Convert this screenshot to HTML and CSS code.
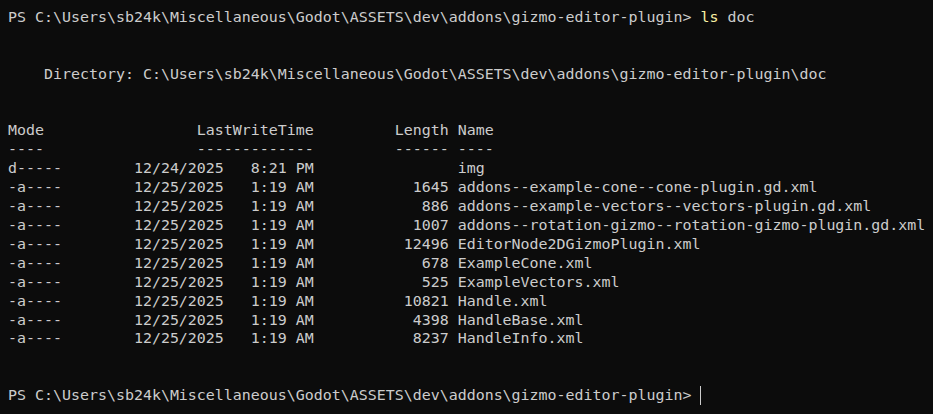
FILE: index.html
```
<!DOCTYPE html>
<html>
<head>
<meta charset="utf-8">
<link rel="stylesheet" href="styles.css">
</head>
<body>
<pre class="term">PS C:\Users\sb24k\Miscellaneous\Godot\ASSETS\dev\addons\gizmo-editor-plugin> <span class="cmd">ls</span> doc


    Directory: C:\Users\sb24k\Miscellaneous\Godot\ASSETS\dev\addons\gizmo-editor-plugin\doc


Mode                 LastWriteTime         Length Name
----                 -------------         ------ ----
d-----        12/24/2025   8:21 PM                img
-a----        12/25/2025   1:19 AM           1645 addons--example-cone--cone-plugin.gd.xml
-a----        12/25/2025   1:19 AM            886 addons--example-vectors--vectors-plugin.gd.xml
-a----        12/25/2025   1:19 AM           1007 addons--rotation-gizmo--rotation-gizmo-plugin.gd.xml
-a----        12/25/2025   1:19 AM          12496 EditorNode2DGizmoPlugin.xml
-a----        12/25/2025   1:19 AM            678 ExampleCone.xml
-a----        12/25/2025   1:19 AM            525 ExampleVectors.xml
-a----        12/25/2025   1:19 AM          10821 Handle.xml
-a----        12/25/2025   1:19 AM           4398 HandleBase.xml
-a----        12/25/2025   1:19 AM           8237 HandleInfo.xml


PS C:\Users\sb24k\Miscellaneous\Godot\ASSETS\dev\addons\gizmo-editor-plugin> <span class="cursor"></span></pre>
</body>
</html>
```
FILE: styles.css
```
html, body {
  margin: 0;
  padding: 0;
  background: #0c0c0c;
  height: 100%;
  overflow: hidden;
}
.term {
  margin: 0;
  padding: 8px 8px;
  font-family: "DejaVu Sans Mono", "Liberation Mono", monospace;
  font-size: 14.95px;
  line-height: 18.9px;
  color: #cccccc;
  white-space: pre;
}
.cmd {
  color: #f9f1a5;
}
.cursor {
  display: inline-block;
  width: 0;
  height: 19px;
  border-left: 1px solid #cccccc;
  vertical-align: -5px;
}
```
